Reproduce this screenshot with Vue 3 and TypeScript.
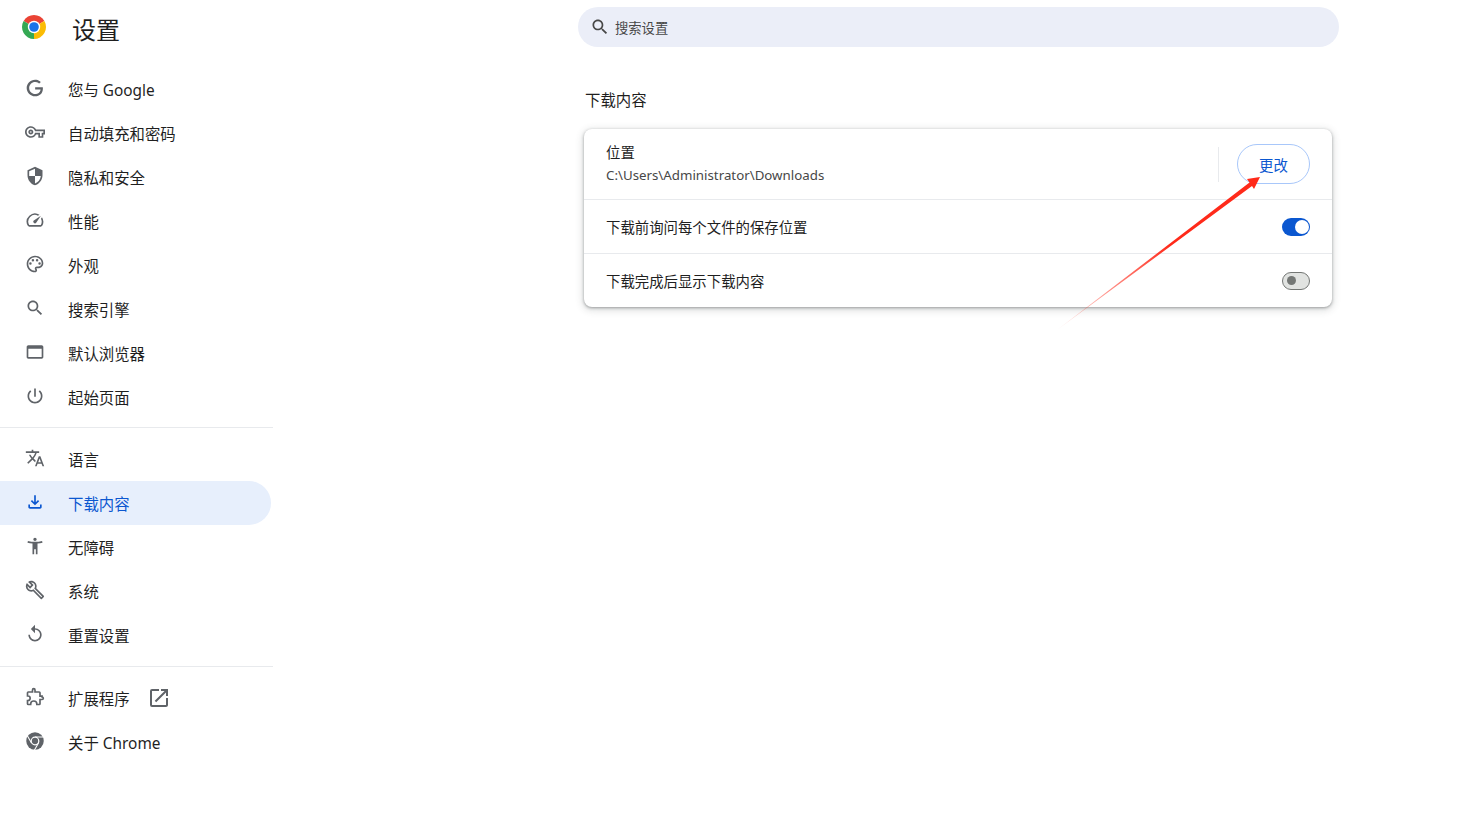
<script setup lang="ts">
interface NavItem {
  label: string
  icon: string
  active?: boolean
  external?: boolean
  kind?: string
}

const groupOne: NavItem[] = [
  { label: '您与 Google', icon: 'M21.35 11.1h-9.17v2.73h6.51c-.33 3.81-3.5 5.44-6.5 5.44C8.36 19.27 5 16.25 5 12c0-4.1 3.2-7.27 7.2-7.27 3.09 0 4.9 1.97 4.9 1.97L19 4.72S16.56 2 12.1 2C6.42 2 2 6.8 2 12c0 5.05 4.13 10 10.22 10 5.35 0 9.25-3.67 9.25-9.09 0-1.15-.12-1.81-.12-1.81z' },
  { label: '自动填充和密码', icon: 'M22 19h-6v-4h-2.68c-1.14 2.42-3.6 4-6.32 4-3.86 0-7-3.14-7-7s3.14-7 7-7c2.72 0 5.17 1.58 6.32 4H24v6h-2v4zm-4-2h2v-4h2v-2H11.94l-.23-.67C11.01 8.34 9.11 7 7 7c-2.76 0-5 2.24-5 5s2.24 5 5 5c2.11 0 4.01-1.34 4.71-3.33l.23-.67H18v4zM7 15c-1.65 0-3-1.35-3-3s1.35-3 3-3 3 1.35 3 3-1.35 3-3 3zm0-4c-.55 0-1 .45-1 1s.45 1 1 1 1-.45 1-1-.45-1-1-1z' },
  { label: '隐私和安全', icon: 'M12 1L3 5v6c0 5.55 3.84 10.74 9 12 5.16-1.26 9-6.45 9-12V5l-9-4zm0 10.99h7c-.53 4.12-3.28 7.79-7 8.94V12H5V6.3l7-3.11v8.8z' },
  { label: '性能', icon: 'M20.38 8.57l-1.23 1.85a8 8 0 0 1-.22 7.58H5.07A8 8 0 0 1 15.58 6.85l1.85-1.23A10 10 0 0 0 3.35 19a2 2 0 0 0 1.72 1h13.85a2 2 0 0 0 1.74-1 10 10 0 0 0-.27-10.44zm-9.79 6.84a2 2 0 0 0 2.83 0l5.66-8.49-8.49 5.66a2 2 0 0 0 0 2.83z' },
  { label: '外观', icon: 'M12 22C6.49 22 2 17.51 2 12S6.49 2 12 2s10 4.04 10 9c0 3.31-2.69 6-6 6h-1.77c-.28 0-.5.22-.5.5 0 .12.05.23.13.33.41.47.64 1.06.64 1.67 0 1.38-1.12 2.5-2.5 2.5zm0-18c-4.41 0-8 3.59-8 8s3.59 8 8 8c.28 0 .5-.22.5-.5 0-.16-.08-.28-.14-.35-.41-.46-.63-1.05-.63-1.65 0-1.38 1.12-2.5 2.5-2.5H16c2.21 0 4-1.79 4-4 0-3.86-3.59-7-8-7zM5 11.5a1.5 1.5 0 1 0 3 0a1.5 1.5 0 1 0-3 0zM8 7.5a1.5 1.5 0 1 0 3 0a1.5 1.5 0 1 0-3 0zM13 7.5a1.5 1.5 0 1 0 3 0a1.5 1.5 0 1 0-3 0zM16 11.5a1.5 1.5 0 1 0 3 0a1.5 1.5 0 1 0-3 0z' },
  { label: '搜索引擎', icon: 'M15.5 14h-.79l-.28-.27C15.41 12.59 16 11.11 16 9.5 16 5.91 13.09 3 9.5 3S3 5.91 3 9.5 5.91 16 9.5 16c1.61 0 3.09-.59 4.23-1.57l.27.28v.79l5 4.99L20.49 19l-4.99-5zm-6 0C7.01 14 5 11.99 5 9.5S7.01 5 9.5 5 14 7.01 14 9.5 11.99 14 9.5 14z' },
  { label: '默认浏览器', icon: 'M20 4H4c-1.11 0-2 .9-2 2v12c0 1.1.89 2 2 2h16c1.1 0 2-.9 2-2V6c0-1.1-.89-2-2-2zm0 14H4V8h16v10z' },
  { label: '起始页面', icon: 'M13 3h-2v10h2V3zm4.83 2.17l-1.42 1.42C17.99 7.86 19 9.81 19 12c0 3.87-3.13 7-7 7s-7-3.13-7-7c0-2.19 1.01-4.14 2.58-5.42L6.17 5.17C4.23 6.82 3 9.26 3 12c0 4.97 4.03 9 9 9s9-4.03 9-9c0-2.74-1.23-5.18-3.17-6.83z' },
]

const groupTwo: NavItem[] = [
  { label: '语言', icon: 'M12.87 15.07l-2.54-2.51.03-.03c1.74-1.94 2.98-4.17 3.71-6.53H17V4h-7V2H8v2H1v1.99h11.17C11.5 7.92 10.44 9.75 9 11.35 8.07 10.32 7.3 9.19 6.69 8h-2c.73 1.63 1.73 3.17 2.98 4.56l-5.09 5.02L4 19l5-5 3.11 3.11.76-2.04zM18.5 10h-2L12 22h2l1.12-3h4.75L21 22h2l-4.5-12zm-2.62 7l1.62-4.33L19.12 17h-3.24z' },
  { label: '下载内容', active: true, icon: 'M12 16l-5-5 1.4-1.45 2.6 2.6V4h2v8.15l2.6-2.6L17 11l-5 5zm-6 4c-.55 0-1.02-.2-1.41-.59C4.2 19.02 4 18.55 4 18v-3h2v3h12v-3h2v3c0 .55-.2 1.02-.59 1.41-.39.39-.86.59-1.41.59H6z' },
  { label: '无障碍', icon: 'M20.5 6c-2.61.7-5.67 1-8.5 1s-5.89-.3-8.5-1L3 8c1.86.5 4 .83 6 1v13h2v-6h2v6h2V9c2-.17 4.14-.5 6-1l-.5-2zM12 6c1.1 0 2-.9 2-2s-.9-2-2-2-2 .9-2 2 .9 2 2 2z' },
  { label: '系统', icon: 'M22.61 18.99l-9.08-9.08c.93-2.34.45-5.1-1.44-7C9.79.61 6.21.4 3.66 2.25L7.5 6.1 6.08 7.51 2.25 3.69C.4 6.23.61 9.82 2.91 12.11c1.86 1.86 4.57 2.35 6.89 1.48l9.11 9.11c.39.39 1.02.39 1.41 0l2.3-2.3c.4-.38.4-1.01-.01-1.41zm-3 1.6l-9.46-9.46c-.61.45-1.29.72-2 .82-1.36.2-2.79-.21-3.83-1.25C3.37 9.76 2.93 8.5 3 7.26l3.09 3.09 4.24-4.24-3.09-3.09c1.24-.07 2.49.37 3.44 1.31 1.08 1.08 1.49 2.57 1.24 3.96-.12.71-.42 1.37-.88 1.96l9.45 9.45-.88.88z' },
  { label: '重置设置', icon: 'M12 5V1L7 6l5 5V7c3.31 0 6 2.69 6 6s-2.69 6-6 6-6-2.69-6-6H4c0 4.42 3.58 8 8 8s8-3.58 8-8-3.58-8-8-8z' },
]

const groupThree: NavItem[] = [
  { label: '扩展程序', external: true, kind: 'extension', icon: 'M20.5 11H18V7a1 1 0 0 0-1-1h-5V3.5a1.5 1.5 0 0 0-3 0V6H4a1 1 0 0 0-1 1v3.8h.5a2.7 2.7 0 0 1 0 5.4H3V20a1 1 0 0 0 1 1h2.8v-.5a3.7 3.7 0 0 1 7.4 0v.5H17a1 1 0 0 0 1-1v-5h2.5a1.5 1.5 0 0 0 0-3z' },
  { label: '关于 Chrome', kind: 'chrome', icon: '' },
]

const externalPath = 'M19 19H5V5h7V3H5a2 2 0 0 0-2 2v14a2 2 0 0 0 2 2h14c1.1 0 2-.9 2-2v-7h-2v7zM14 3v2h3.59l-9.83 9.83 1.41 1.41L19 6.41V10h2V3h-7z'
const searchPath = 'M15.5 14h-.79l-.28-.27C15.41 12.59 16 11.11 16 9.5 16 5.91 13.09 3 9.5 3S3 5.91 3 9.5 5.91 16 9.5 16c1.61 0 3.09-.59 4.23-1.57l.27.28v.79l5 4.99L20.49 19l-4.99-5zm-6 0C7.01 14 5 11.99 5 9.5S7.01 5 9.5 5 14 7.01 14 9.5 11.99 14 9.5 14z'
const groups = [groupOne, groupTwo, groupThree]
</script>

<template>
  <div class="page">
    <aside class="sidebar">
      <header class="brand">
        <svg class="logo" viewBox="0 0 24 24" width="24" height="24" aria-hidden="true">
          <path d="M12 12L1.61 6A12 12 0 0 1 22.39 6z" fill="#ea4335" />
          <path d="M12 12L1.61 6A12 12 0 0 0 12 24z" fill="#34a853" />
          <path d="M12 12L12 24A12 12 0 0 0 22.39 6z" fill="#fbbc04" />
          <circle cx="12" cy="12" r="6.2" fill="#fff" />
          <circle cx="12" cy="12" r="4.8" fill="#1a73e8" />
        </svg>
        <h1 class="brand-title">设置</h1>
      </header>
      <nav class="nav">
        <template v-for="(group, gi) in groups" :key="gi">
          <div v-if="gi > 0" class="divider" :class="{ 'divider-wide': gi === 2 }"></div>
          <a v-for="item in group" :key="item.label" class="nav-item" :class="{ active: item.active }">
            <svg v-if="item.kind === 'chrome'" class="nav-icon" viewBox="0 0 24 24" aria-hidden="true">
              <circle cx="12" cy="12" r="10.5" fill="#5f6368" />
              <path d="M12 7.2H22M7.8 14.4L2.8 5.8M16.2 14.4L11.2 23" stroke="#fff" stroke-width="1.3" fill="none" />
              <circle cx="12" cy="12" r="5.3" fill="#fff" />
              <circle cx="12" cy="12" r="3.8" fill="#5f6368" />
            </svg>
            <svg v-else-if="item.kind === 'extension'" class="nav-icon" viewBox="0 0 24 24" aria-hidden="true">
              <path :d="item.icon" fill="none" stroke="#5f6368" stroke-width="2" />
            </svg>
            <svg v-else class="nav-icon" viewBox="0 0 24 24" aria-hidden="true">
              <path :d="item.icon" />
            </svg>
            <span>{{ item.label }}</span>
            <svg v-if="item.external" class="external" viewBox="0 0 24 24" aria-hidden="true">
              <path :d="externalPath" />
            </svg>
          </a>
        </template>
      </nav>
    </aside>

    <main class="main">
      <div class="search">
        <svg class="search-icon" viewBox="0 0 24 24" aria-hidden="true"><path :d="searchPath" /></svg>
        <span>搜索设置</span>
      </div>
      <h2 class="section-title">下载内容</h2>
      <section class="card">
        <div class="row row-location">
          <div class="location-text">
            <div>位置</div>
            <div class="path">C:\Users\Administrator\Downloads</div>
          </div>
          <div class="separator"></div>
          <button class="change" type="button">更改</button>
        </div>
        <div class="row">
          <span>下载前询问每个文件的保存位置</span>
          <span class="toggle on"></span>
        </div>
        <div class="row">
          <span>下载完成后显示下载内容</span>
          <span class="toggle off"></span>
        </div>
      </section>
    </main>

    <svg class="arrow" width="1478" height="817" viewBox="0 0 1478 817" aria-hidden="true">
      <defs>
        <linearGradient id="arrowFade" gradientUnits="userSpaceOnUse" x1="1057" y1="330" x2="1170" y2="245">
          <stop offset="0" stop-color="#ff2a1a" stop-opacity="0.1" />
          <stop offset="1" stop-color="#ff2a1a" />
        </linearGradient>
      </defs>
      <polygon points="1260,177 1247,179 1249.5,182.5 1057,330 1252,186 1254,189" fill="url(#arrowFade)" />
    </svg>
  </div>
</template>

<style>
html, body {
  margin: 0;
  background: #fff;
}
</style>

<style scoped>
.page {
  position: relative;
  display: flex;
  min-height: 817px;
  overflow: hidden;
  font-family: "Noto Sans", "Noto Sans CJK SC", sans-serif;
  color: #1f1f1f;
  background: #fff;
}
.sidebar {
  width: 273px;
  flex: none;
}
.brand {
  display: flex;
  align-items: center;
  height: 55px;
  padding-left: 22px;
}
.logo {
  margin-top: -1px;
  flex: none;
}
.brand-title {
  margin: 2px 0 0 26px;
  font-size: 24px;
  font-weight: 400;
}
.nav {
  padding-top: 12px;
}
.nav-item {
  display: flex;
  align-items: center;
  width: 271px;
  height: 44px;
  box-sizing: border-box;
  padding-left: 25px;
  font-size: 15.4px;
  border-radius: 0 22px 22px 0;
}
.nav-item span {
  margin-left: 23px;
}
.nav-icon {
  width: 20px;
  height: 20px;
  flex: none;
  margin-top: -2px;
  fill: #5f6368;
}
.nav-item.active {
  background: #e7effc;
  color: #0b57d0;
}
.nav-item.active .nav-icon {
  fill: #0b57d0;
}
.external {
  width: 24px;
  height: 24px;
  margin-left: 17px;
  fill: #5f6368;
}
.divider {
  height: 1px;
  margin: 8px 0 9px;
  background: #e8eaed;
}
.divider-wide {
  margin-top: 9px;
}
.main {
  flex: 1;
  padding: 7px 0 0 305px;
  min-width: 0;
}
.search {
  display: flex;
  align-items: center;
  width: 761px;
  height: 40px;
  box-sizing: border-box;
  padding-left: 12px;
  border-radius: 20px;
  background: #ebeef8;
  color: #474747;
  font-size: 13.3px;
}
.search-icon {
  width: 20px;
  height: 20px;
  margin-right: 5px;
  fill: #474747;
}
.section-title {
  margin: 42px 0 17px 7px;
  height: 23px;
  line-height: 23px;
  font-size: 15.4px;
  font-weight: 400;
}
.card {
  width: 748px;
  margin-left: 6px;
  border-radius: 8px;
  background: #fff;
  box-shadow: 0 1px 3px rgba(60, 64, 67, 0.45), 0 2px 7px 2px rgba(60, 64, 67, 0.15);
  font-size: 14.4px;
}
.row {
  display: flex;
  align-items: center;
  justify-content: space-between;
  height: 53px;
  padding: 0 22px;
  border-top: 1px solid #e8eaed;
}
.row-location {
  height: 70px;
  border-top: 0;
  justify-content: flex-start;
}
.location-text {
  flex: 1;
  line-height: 22px;
}
.path {
  color: #474747;
  font-size: 13.3px;
}
.separator {
  width: 1px;
  height: 35px;
  background: #e8eaed;
  margin-right: 18px;
}
.change {
  width: 73px;
  height: 40px;
  padding: 0;
  border: 1px solid #a8c7fa;
  border-radius: 20px;
  background: #fff;
  color: #0b57d0;
  font: inherit;
}
.toggle {
  position: relative;
  display: block;
  width: 28px;
  height: 18px;
  box-sizing: border-box;
  border-radius: 9px;
}
.toggle::after {
  content: "";
  position: absolute;
  border-radius: 50%;
}
.toggle.on {
  background: #0b57d0;
}
.toggle.on::after {
  width: 14px;
  height: 14px;
  top: 2px;
  right: 1px;
  background: #fff;
}
.toggle.off {
  background: #e1e3e1;
  border: 1px solid #747775;
}
.toggle.off::after {
  width: 9px;
  height: 9px;
  top: 3.5px;
  left: 3.5px;
  background: #747775;
}
.arrow {
  position: absolute;
  top: 0;
  left: 0;
  pointer-events: none;
}
</style>
